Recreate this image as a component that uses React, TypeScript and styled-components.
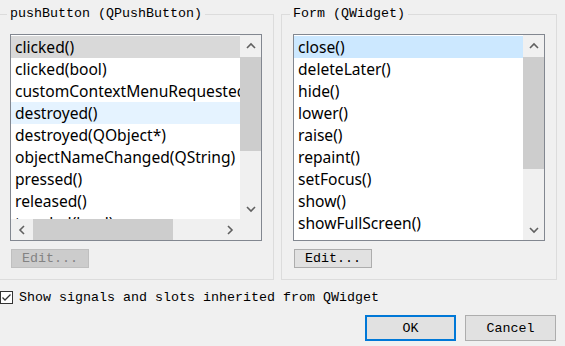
import styled, { createGlobalStyle } from 'styled-components';

const Global = createGlobalStyle`
    html, body {
        margin: 0;
        padding: 0;
        background: #f0f0f0;
    }
`;

const MONO = `"Liberation Mono", "DejaVu Sans Mono", monospace`;
const SANS = `"Noto Sans", "Open Sans", sans-serif`;

const Dialog = styled.div`
    width: 565px;
    height: 346px;
    overflow: hidden;
    background: #f0f0f0;
    font-family: ${MONO};
    font-size: 13.33px;
    color: #000;
`;

const Inner = styled.div`
    margin-left: -2px;
    padding-top: 6px;
    display: flex;
    flex-direction: column;
`;

const Groups = styled.div`
    display: flex;
    gap: 7px;
`;

const Group = styled.fieldset`
    margin: 0;
    width: 276px;
    height: 274px;
    box-sizing: border-box;
    min-width: 0;
    padding: 0 11px 11px;
    border: 1px solid #dcdcdc;
    display: flex;
    flex-direction: column;
`;

const Legend = styled.legend`
    padding: 0 3px;
    margin-left: -3px;
    line-height: 16px;
    font-family: ${MONO};
    font-size: 13.33px;
`;

const ListBox = styled.div<{ $hscroll?: boolean }>`
    margin-top: 12px;
    width: 252px;
    height: 207px;
    flex: none;
    box-sizing: border-box;
    border: 1px solid #828790;
    background: #fff;
    display: grid;
    grid-template-columns: 229px 21px;
    grid-template-rows: ${p => (p.$hscroll ? '184px 21px' : '205px')};
`;

const Items = styled.div`
    overflow: hidden;
    padding-top: 1px;
`;

const Item = styled.div<{ $state?: 'selected' | 'inactive' | 'hover' }>`
    height: 22px;
    box-sizing: border-box;
    padding: 1px 0 0 4px;
    line-height: 21px;
    white-space: nowrap;
    font-family: ${SANS};
    font-size: 15.6px;
    color: #000;
    background: ${p =>
        p.$state === 'selected' ? '#cce8ff'
        : p.$state === 'inactive' ? '#d9d9d9'
        : p.$state === 'hover' ? '#e5f3ff'
        : 'transparent'};
`;

const VBar = styled.div`
    background: #f0f0f0;
    display: flex;
    flex-direction: column;
`;

const HBar = styled.div`
    background: #f0f0f0;
    display: flex;
`;

const Arrow = styled.div`
    width: 21px;
    height: 21px;
    flex: none;
    display: flex;
    align-items: center;
    justify-content: center;
`;

const Track = styled.div<{ $vertical?: boolean }>`
    flex: 1;
    display: flex;
    flex-direction: ${p => (p.$vertical ? 'column' : 'row')};
`;

const Thumb = styled.div<{ $vertical?: boolean; $start: number; $size: number }>`
    background: #cdcdcd;
    flex: none;
    ${p => p.$vertical
        ? `margin-top: ${p.$start}px; height: ${p.$size}px; width: 21px;`
        : `margin-left: ${p.$start}px; width: ${p.$size}px; height: 21px;`}
`;

const Corner = styled.div`
    background: #f0f0f0;
`;

const EditButton = styled.button<{ $disabled?: boolean }>`
    margin: 8px 0 0 1px;
    width: 78px;
    height: 19px;
    flex: none;
    box-sizing: border-box;
    padding: 0;
    font-family: ${MONO};
    font-size: 13.33px;
    line-height: 17px;
    border: 1px solid ${p => (p.$disabled ? '#bfbfbf' : '#adadad')};
    background: ${p => (p.$disabled ? '#cccccc' : '#e1e1e1')};
    color: ${p => (p.$disabled ? '#838383' : '#000')};
`;

const CheckRow = styled.label`
    display: flex;
    align-items: center;
    gap: 6px;
    margin: 10px 0 0 2px;
    height: 15px;
`;

const CheckBox = styled.span`
    width: 13px;
    height: 13px;
    box-sizing: border-box;
    border: 1px solid #333;
    background: #fff;
    display: flex;
    align-items: center;
    justify-content: center;
`;

const Buttons = styled.div`
    display: flex;
    justify-content: flex-end;
    gap: 9px;
    padding-right: 9px;
    margin-top: 10px;
`;

const DialogButton = styled.button<{ $default?: boolean }>`
    width: 91px;
    height: 26px;
    box-sizing: border-box;
    padding: 0;
    font-family: ${MONO};
    font-size: 13.33px;
    color: #000;
    background: #e1e1e1;
    border: ${p => (p.$default ? '2px solid #0078d7' : '1px solid #adadad')};
`;

function Chevron({ dir }: { dir: 'up' | 'down' | 'left' | 'right' }) {
    const pts = {
        up: '1,6 5,2 9,6',
        down: '1,2 5,6 9,2',
        left: '6,1 2,5 6,9',
        right: '2,1 6,5 2,9',
    }[dir];
    const w = dir === 'up' || dir === 'down' ? 10 : 8;
    const h = dir === 'up' || dir === 'down' ? 8 : 10;
    return (
        <svg width={w} height={h} viewBox={`0 0 ${w} ${h}`}>
            <polyline points={pts} fill="none" stroke="#606060" strokeWidth="1.6" />
        </svg>
    );
}

interface Row {
    text: string;
    state?: 'selected' | 'inactive' | 'hover';
}

const signals: Row[] = [
    { text: 'clicked()', state: 'inactive' },
    { text: 'clicked(bool)' },
    { text: 'customContextMenuRequested(QPoint)' },
    { text: 'destroyed()', state: 'hover' },
    { text: 'destroyed(QObject*)' },
    { text: 'objectNameChanged(QString)' },
    { text: 'pressed()' },
    { text: 'released()' },
    { text: 'toggled(bool)' },
];

const slots: Row[] = [
    { text: 'close()', state: 'selected' },
    { text: 'deleteLater()' },
    { text: 'hide()' },
    { text: 'lower()' },
    { text: 'raise()' },
    { text: 'repaint()' },
    { text: 'setFocus()' },
    { text: 'show()' },
    { text: 'showFullScreen()' },
];

function List(props: { rows: Row[]; thumb: number; hthumb?: [number, number] }) {
    return (
        <ListBox $hscroll={!!props.hthumb}>
            <Items>
                {props.rows.map(r => (
                    <Item key={r.text} $state={r.state}>{r.text}</Item>
                ))}
            </Items>
            <VBar>
                <Arrow><Chevron dir="up" /></Arrow>
                <Track $vertical>
                    <Thumb $vertical $start={1} $size={props.thumb} />
                </Track>
                <Arrow><Chevron dir="down" /></Arrow>
            </VBar>
            {props.hthumb && (
                <>
                    <HBar>
                        <Arrow><Chevron dir="left" /></Arrow>
                        <Track>
                            <Thumb $start={props.hthumb[0]} $size={props.hthumb[1]} />
                        </Track>
                        <Arrow><Chevron dir="right" /></Arrow>
                    </HBar>
                    <Corner />
                </>
            )}
        </ListBox>
    );
}

export default function App() {
    return (
        <Dialog>
            <Global />
            <Inner>
                <Groups>
                    <Group>
                        <Legend>pushButton (QPushButton)</Legend>
                        <List rows={signals} thumb={94} hthumb={[1, 140]} />
                        <EditButton $disabled disabled>Edit...</EditButton>
                    </Group>
                    <Group>
                        <Legend>Form (QWidget)</Legend>
                        <List rows={slots} thumb={112} />
                        <EditButton>Edit...</EditButton>
                    </Group>
                </Groups>
                <CheckRow>
                    <CheckBox>
                        <svg width="11" height="11" viewBox="0 0 11 11">
                            <polyline points="1.5,5.5 4,8 9.5,2.5" fill="none" stroke="#333" strokeWidth="1.3" />
                        </svg>
                    </CheckBox>
                    Show signals and slots inherited from QWidget
                </CheckRow>
                <Buttons>
                    <DialogButton $default>OK</DialogButton>
                    <DialogButton>Cancel</DialogButton>
                </Buttons>
            </Inner>
        </Dialog>
    );
}
